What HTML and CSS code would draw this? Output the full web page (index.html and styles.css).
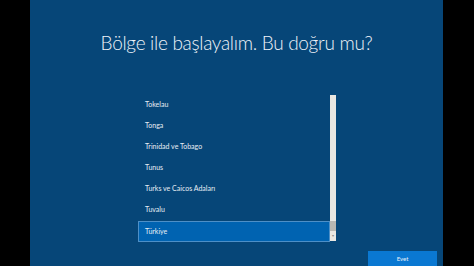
FILE: index.html
```html
<!DOCTYPE html>
<html lang="tr">
<head>
<meta charset="utf-8">
<link rel="stylesheet" href="styles.css">
</head>
<body>
<div class="frame">
  <div class="side"></div>
  <main class="screen">
    <div class="progress"><div class="progress-seg"></div></div>
    <h1 class="title">Bölge ile başlayalım. Bu doğru mu?</h1>
    <div class="listbox">
      <ul class="list">
        <li class="item">Tokelau</li>
        <li class="item">Tonga</li>
        <li class="item">Trinidad ve Tobago</li>
        <li class="item">Tunus</li>
        <li class="item">Turks ve Caicos Adaları</li>
        <li class="item">Tuvalu</li>
        <li class="item selected">Türkiye</li>
      </ul>
      <div class="scrollbar">
        <div class="sb-track"></div>
        <div class="sb-thumb"></div>
        <div class="sb-arrow">&#9662;</div>
      </div>
    </div>
    <div class="actions"><button class="btn">Evet</button></div>
  </main>
  <div class="side"></div>
</div>
</body>
</html>
```
FILE: styles.css
```css
html, body {
  margin: 0;
  padding: 0;
  background: #000;
  width: 474px;
  height: 266px;
  overflow: hidden;
}
.frame {
  display: flex;
  height: 266px;
}
.side {
  width: 30px;
  background: #000;
}
.frame .side:last-child { width: 31px; }
.screen {
  width: 413px;
  background: #064678;
  display: flex;
  flex-direction: column;
  font-family: "Lato", "Open Sans", sans-serif;
  color: #eef3f8;
}
.progress {
  height: 3px;
  background: #2e2e2e;
  display: flex;
}
.progress-seg {
  margin-left: 98px;
  width: 79px;
  background: #c9d3dd;
}
.title {
  margin: 29px 0 0;
  font-weight: 300;
  font-size: 19px;
  line-height: 28px;
  text-align: center;
  letter-spacing: -0.3px;
}
.listbox {
  margin: 37px 0 0 108px;
  width: 198px;
  display: flex;
}
.list {
  list-style: none;
  margin: 0;
  padding: 0;
  width: 192px;
}
.item {
  height: 21px;
  line-height: 21px;
  font-size: 7px;
  padding-left: 7px;
  box-sizing: border-box;
  color: #e6edf4;
  font-family: "Lato", sans-serif;
}
.item.selected {
  background: #0063b1;
  border: 1px solid #4d8fc7;
  line-height: 19px;
  padding-left: 6px;
  margin-top: 1px;
}
.scrollbar {
  width: 6px;
  margin-top: 1px;
  height: 146px;
  background: #e9e7e2;
  display: flex;
  flex-direction: column;
  justify-content: flex-end;
}
.sb-track { flex: 1; }
.sb-thumb {
  height: 10px;
  background: #b9b7b2;
}
.sb-arrow {
  height: 10px;
  font-size: 4px;
  line-height: 10px;
  text-align: center;
  color: #8a8a8a;
}
.actions {
  display: flex;
  justify-content: flex-end;
  margin-top: 9px;
  padding-right: 6px;
}
.btn {
  width: 69px;
  height: 20px;
  border: none;
  background: #0a78d2;
  color: #e8f1fa;
  font-family: "Lato", sans-serif;
  font-size: 6px;
  padding: 0 0 5px;
  margin: 0;
}
```
